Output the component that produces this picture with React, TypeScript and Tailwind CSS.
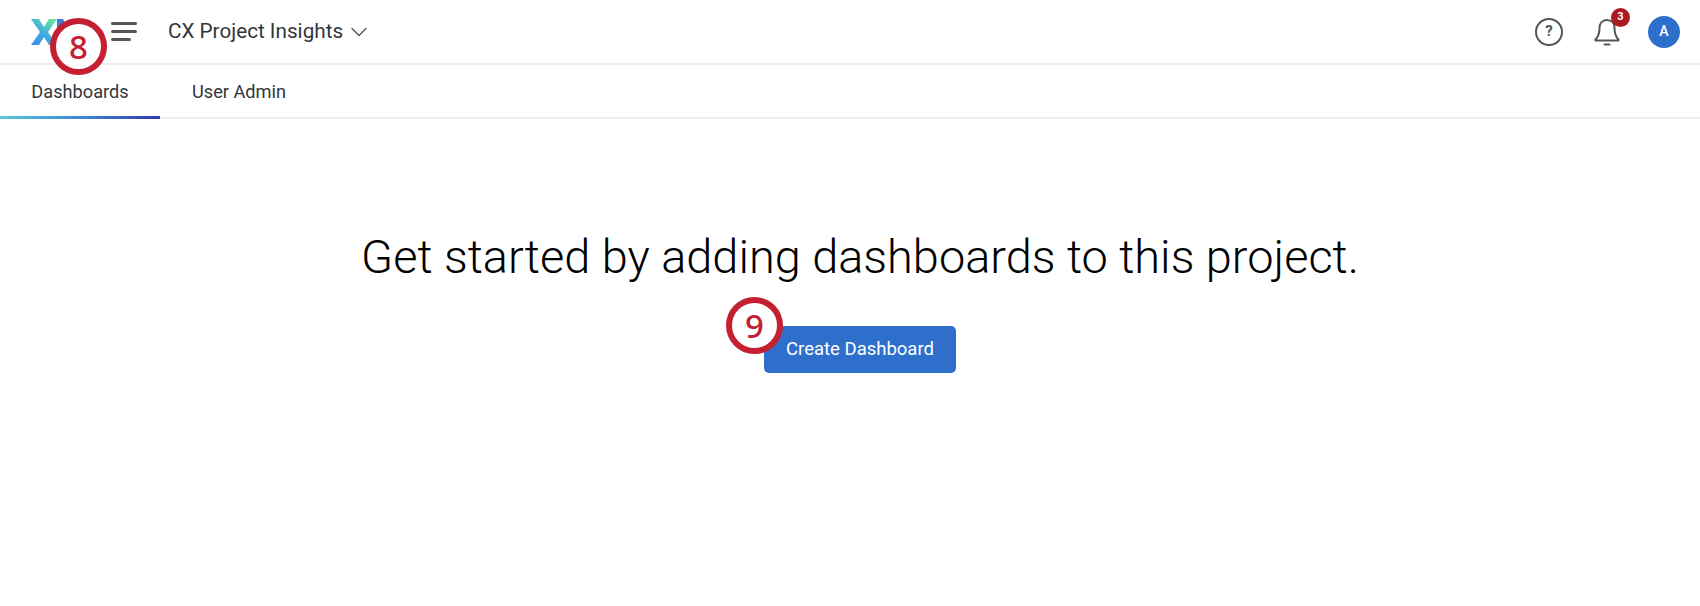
import { ChevronDown } from "lucide-react";

function Marker({ n, className }: { n: string; className: string }) {
  return (
    <div
      className={`absolute flex h-[57px] w-[57px] items-center justify-center rounded-full border-[6px] border-[#c42032] bg-white font-['Noto_Sans',sans-serif] text-[33px] font-medium leading-none text-[#c42032] ${className}`}
    >
      {n}
    </div>
  );
}

function XmLogo() {
  return (
    <svg width="44" height="30" viewBox="0 0 44 30" className="shrink-0">
      <defs>
        <linearGradient id="xm" x1="0" y1="1" x2="0.7" y2="0">
          <stop offset="0" stopColor="#3a8fe8" />
          <stop offset="0.5" stopColor="#3fa9e0" />
          <stop offset="1" stopColor="#62e0a8" />
        </linearGradient>
      </defs>
      <path d="M1 2h8l5 8 5-8h8l-9 13 9 13h-8l-5-8-5 8H1l9-13z" fill="url(#xm)" />
      <path d="M27 2h6l5 9 5-9v26h-6V14l-4 7-4-7v14h-2z" fill="#3d7fd8" />
    </svg>
  );
}

function BellIcon() {
  return (
    <svg width="28" height="30" viewBox="0 0 28 30" fill="none" stroke="#525659" strokeWidth="2" strokeLinejoin="round">
      <path d="M14 3c-5 0-7.500 3.500-7.500 8 0 6-1.500 9-4 11.500v1h23v-1c-2.500-2.500-4-5.500-4-11.500 0-4.500-2.500-8-7.500-8z" />
      <path d="M11.500 27.500h5" strokeLinecap="round" />
    </svg>
  );
}

function Header() {
  return (
    <header className="flex h-[65px] items-center border-b-2 border-[#eeeeee] pl-[30px] pr-[20px]">
      <XmLogo />
      <div className="ml-[37px] flex w-[28px] flex-col gap-[5px]">
        <span className="h-[3px] w-[26px] rounded-full bg-[#525659]" />
        <span className="h-[3px] w-[26px] rounded-full bg-[#525659]" />
        <span className="h-[3px] w-[20px] rounded-full bg-[#525659]" />
      </div>
      <div className="ml-[29px] flex items-center gap-[2px] pt-[1px] text-[20.700px] text-[#32363a]">
        <span>CX Project Insights</span>
        <ChevronDown className="h-[28px] w-[28px] text-[#525659]" strokeWidth={1.2} />
      </div>
      <div className="ml-auto flex items-center">
        <div className="flex h-[28px] w-[28px] items-center justify-center rounded-full border-2 border-[#525659] text-[15px] font-bold text-[#525659]">
          ?
        </div>
        <div className="relative ml-[30px] flex">
          <BellIcon />
          <span className="absolute right-[-9px] top-[-9px] flex h-[19px] w-[19px] items-center justify-center rounded-full bg-[#ab1a1f] text-[11px] font-bold text-white">
            3
          </span>
        </div>
        <div className="ml-[27px] flex h-[32px] w-[32px] items-center justify-center rounded-full bg-[#2f6fcc] text-[14px] font-medium text-white">
          A
        </div>
      </div>
    </header>
  );
}

function Tabs() {
  return (
    <nav className="flex h-[54px] border-b-2 border-[#eeeeee] text-[18.200px] text-[#32363a]">
      <div className="relative flex w-[160px] items-center justify-center pt-[1px]">
        Dashboards
        <span className="absolute bottom-[-2px] left-0 h-[3px] w-full bg-gradient-to-r from-[#5bc8d8] via-[#3f86d8] to-[#3238b0]" />
      </div>
      <div className="ml-[32px] flex items-center pt-[1px]">User Admin</div>
    </nav>
  );
}

export default function App() {
  return (
    <div className="relative h-[606px] w-[1700px] overflow-hidden bg-white font-['Roboto',sans-serif]">
      <Header />
      <Tabs />
      <main className="flex flex-col items-center pl-[20px] pt-[108px]">
        <h1 className="text-[46.900px] font-light leading-[60px] text-black">
          Get started by adding dashboards to this project.
        </h1>
        <button className="mt-[39px] h-[47px] w-[192px] rounded-[5px] bg-[#2f6fcc] pt-[1px] text-[18.500px] text-white">
          Create Dashboard
        </button>
      </main>
      <Marker n="8" className="left-[50px] top-[18px]" />
      <Marker n="9" className="left-[726px] top-[297px]" />
    </div>
  );
}
